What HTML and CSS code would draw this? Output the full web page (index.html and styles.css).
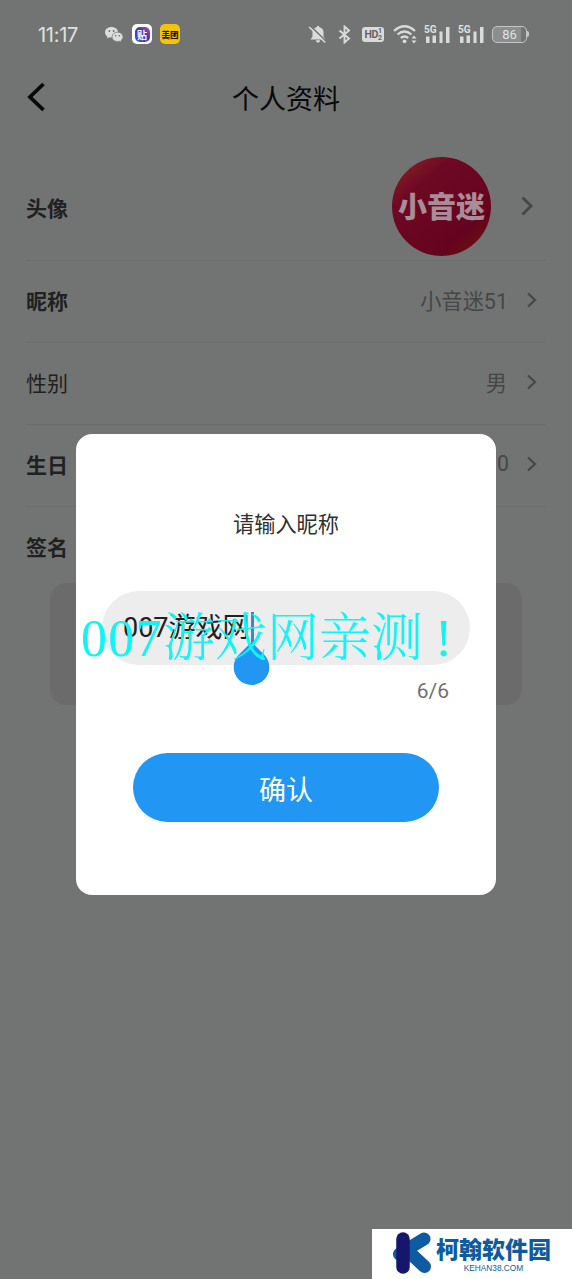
FILE: index.html
```html
<!DOCTYPE html>
<html lang="zh-CN">
<head>
<meta charset="utf-8">
<title>个人资料</title>
<link rel="stylesheet" href="styles.css">
</head>
<body>
<div class="screen">
  <div class="status">
    <span class="time">11:17</span>
    <svg class="wechat" width="20" height="17" viewBox="0 0 20 17"><path d="M7.500 1C3.700 1 1 3.400 1 6.300c0 1.800.9 3.200 2.400 4.200L3 12.500l2.200-1.200c.8.200 1.500.3 2.300.3 3.700 0 6.500-2.400 6.500-5.300S11.200 1 7.500 1z" fill="#dcdedd"/><path d="M13.500 6.200c-3 0-5.500 2-5.500 4.700s2.500 4.600 5.500 4.600c.7 0 1.300-.1 1.900-.3l2 1-.4-1.800c1.300-.9 2-2.100 2-3.500 0-2.700-2.500-4.700-5.500-4.700z" fill="#dcdedd" stroke="#727473" stroke-width=".7"/><g fill="#666867"><circle cx="5.400" cy="5" r=".9"/><circle cx="9.600" cy="5" r=".9"/><circle cx="11.700" cy="9.700" r=".8"/><circle cx="15.300" cy="9.700" r=".8"/></g></svg>
    <span class="app tieba"><b>贴</b></span>
    <span class="app meituan">美团</span>
    <div class="system">
      <svg width="20" height="19" viewBox="0 0 20 19"><path d="M10 1c.9 0 1.300.5 1.300 1.200 3 .6 4.200 2.500 4.200 4.900v4.400l2 2.900h-15l2-2.900V7.100c0-2.400 1.200-4.300 4.200-4.900C8.700 1.500 9.100 1 10 1zM7.800 15.200h4.400c-.2 1.500-1.100 2.300-2.200 2.300s-2-.8-2.200-2.300z" fill="#d9dbda"/><path d="M2.500 1l16 15.500" stroke="#727473" stroke-width="1.600"/><path d="M1.200 2l16 15.500" stroke="#d9dbda" stroke-width="1.600"/></svg>
      <svg class="bt" width="13" height="19" viewBox="0 0 13 19"><path d="M1.500 5.500l9.500 8-4.500 4V1.500l4.500 4-9.500 8" fill="none" stroke="#d9dbda" stroke-width="1.900"/></svg>
      <span class="hd">HD<i>1<br>2</i></span>
      <svg class="wifi" width="25" height="21" viewBox="0 0 25 21"><g fill="none" stroke="#d9dbda" stroke-width="2.300"><path d="M1 7Q11.500-2.500 22 7"/><path d="M4.500 10.500q7-6 14 0"/><path d="M7.800 14q3.700-3 7.400 0"/></g><circle cx="11.500" cy="17.300" r="1.900" fill="#d9dbda"/><path d="M18.500 14.500L21 11.500l2.500 3zM18.500 16.500l2.500 3 2.500-3z" fill="#d9dbda"/></svg>
      <span class="signal"><em>5G</em><svg width="26" height="17" viewBox="0 0 26 17"><path d="M2 10.500h3.500V17H2zM8.500 9.500H12V17H8.500zM15.500 5.500h3V17h-3zM22 1h3.500v16H22z" fill="#d9dbda"/></svg></span>
      <span class="signal second"><em>5G</em><svg width="26" height="17" viewBox="0 0 26 17"><path d="M2 10.500h3.500V17H2zM8.500 9.500H12V17H8.500zM15.500 5.500h3V17h-3zM22 1h3.500v16H22z" fill="#d9dbda"/></svg></span>
      <span class="battery">86</span>
    </div>
  </div>
  <header class="header">
    <svg class="back" width="22" height="30" viewBox="0 0 22 30"><path d="M19.500 2L6 15l13.500 13" fill="none" stroke="#080909" stroke-width="3.800"/></svg>
    <h1>个人资料</h1>
  </header>
  <main class="profile">
    <div class="row photo"><b>头像</b><span class="avatar">小音迷</span><svg class="arrow" width="12" height="20" viewBox="0 0 12 20"><path d="M1.500 1.500L10 10l-8.500 8.500" fill="none" stroke="#454746" stroke-width="2.800"/></svg></div>
    <div class="row"><b>昵称</b><span class="value">小音迷<i>51</i></span><svg class="arrow" width="10" height="16" viewBox="0 0 10 16"><path d="M1 1.500L8 8l-7 6.500" fill="none" stroke="#454746" stroke-width="2.200"/></svg></div>
    <div class="row"><span>性别</span><span class="value male">男</span><svg class="arrow" width="10" height="16" viewBox="0 0 10 16"><path d="M1 1.500L8 8l-7 6.500" fill="none" stroke="#454746" stroke-width="2.200"/></svg></div>
    <div class="row"><b>生日</b><span class="value birthday">0</span><svg class="arrow" width="10" height="16" viewBox="0 0 10 16"><path d="M1 1.500L8 8l-7 6.500" fill="none" stroke="#454746" stroke-width="2.200"/></svg></div>
    <div class="sign"><b>签名</b></div>
    <div class="bio"></div>
  </main>
  <section class="dialog">
    <p class="prompt">请输入昵称</p>
    <div class="input"><span class="typed"><i>007</i>游戏网</span><i class="caret"><svg class="handle" width="37" height="44" viewBox="0 0 37 44"><path d="M18.500 0L31 12.500a17.800 17.800 0 1 1-25 0z" fill="#2196f3"/></svg></i></div>
    <p class="count">6/6</p>
    <button class="confirm">确认</button>
  </section>
  <div class="watermark"><span>007</span>游戏网亲测<span class="bang">!</span></div>
  <div class="brand">
    <svg width="40" height="44" viewBox="0 0 40 44"><g fill="none" stroke-linecap="round" stroke-width="13"><path d="M6.500 23L31 8M17 22l14.500 13.500" stroke="#0e5ba2"/><path d="M10 8v28" stroke="#17166d" stroke-width="13.500"/></g></svg>
    <div class="brandtext"><strong>柯翰软件园</strong><small>KEHAN38.COM</small></div>
  </div>
</div>
</body>
</html>
```
FILE: styles.css
```css
* { box-sizing: border-box; }
body { margin: 0; background: #727473; font-family: "Noto Sans CJK SC", sans-serif; color: #202121; }
h1, p { margin: 0; font-weight: 400; }
i, em { font-style: normal; }
.screen { position: relative; width: 572px; height: 1279px; overflow: hidden; }
.status { height: 68px; padding-left: 38px; display: flex; align-items: center; color: #dfe1e0; }
.time { width: 66px; font: 20px/20px Inter, sans-serif; letter-spacing: -.3px; padding-top: 1px; }
.app { width: 20px; height: 20px; border-radius: 5px; display: flex; align-items: center; justify-content: center; }
.tieba { margin-left: 8px; background: #fff; }
.tieba b { width: 15px; height: 15px; border-radius: 5px; background: linear-gradient(45deg, #2457d5, #4936b0 60%, #c34ac8); color: #fff; font-size: 10px; line-height: 15px; text-align: center; }
.meituan { margin-left: 8px; background: #f5c407; color: #18140a; font-size: 8.5px; font-weight: 900; white-space: nowrap; }
.system { margin-left: 128px; display: flex; align-items: center; }
.bt { margin-left: 10px; }
.hd { margin-left: 11px; margin-top: 1px; width: 22px; height: 15px; border-radius: 3px; background: #d9dbda; color: #626463; display: flex; align-items: center; justify-content: center; font: bold 10.5px/15px Roboto, sans-serif; letter-spacing: -.4px; }
.hd i { font: bold 7px/6.500px Roboto, sans-serif; }
.wifi { margin-left: 9px; }
.signal { position: relative; margin-left: 6px; width: 26px; height: 17px; }
.signal svg { display: block; }
.signal.second { margin-left: 8px; }
.signal em { position: absolute; left: 0; top: -2px; font: bold 10px/11px Roboto, sans-serif; }
.battery { position: relative; margin-left: 8px; width: 35px; height: 17px; border: 1.5px solid #c4c6c5; border-radius: 5px; background: linear-gradient(90deg, #8c8e8d 86%, transparent 86%); font: 13px/15px Roboto, sans-serif; text-align: center; }
.battery::after { content: ""; position: absolute; left: 34px; top: 4px; width: 2px; height: 6px; border-radius: 0 2px 2px 0; background: #c4c6c5; }
.header { height: 60px; padding: 0 24px; display: grid; grid-template-columns: 22px 1fr 22px; align-items: center; }
.back { margin-top: -3px; }
.header h1 { font-size: 27px; line-height: 40px; text-align: center; color: #080909; }
.profile { padding: 0 26px; font-size: 21px; }
.row { height: 82px; display: flex; align-items: center; border-bottom: 1px solid #6b6d6c; }
.row b, .sign b { font-weight: 700; }
.row > :first-child { margin-top: -4px; }
.value { margin: -4px 0 0 auto; color: #454746; font-size: 21.2px; }
.value i { font: 21.5px Roboto, sans-serif; }
.birthday { font-family: Roboto, sans-serif; }
.arrow { margin: -4px 9px 0 19px; }
.birthday + .arrow { margin-left: 18px; }
.male + .arrow { margin-left: 20px; }
.row.photo { height: 133px; padding-top: 24px; }
.photo > b:first-child { margin-top: 2px; }
.avatar { margin-left: auto; width: 99px; height: 99px; margin-top: 0; border-radius: 50%; background: linear-gradient(140deg, #892426 4%, #6e0923 28%, #66031f 75%, #69100f 88%, #351317 90%); color: #a88c97; font-size: 29px; font-weight: 900; line-height: 97px; text-align: center; }
.photo .arrow { margin: 0 13px 0 30px; }
.sign { height: 76px; padding-top: 23px; line-height: 32px; }
.bio { margin: 0 24px; height: 122px; border-radius: 16px; background: #6b6b6b; }
.dialog { position: absolute; left: 76px; top: 434px; width: 420px; height: 461px; border-radius: 16px; background: #fff; padding: 73px 26px 0; }
.prompt { font-size: 21.2px; line-height: 32px; text-align: center; color: #303030; }
.input { margin-top: 52px; width: 368px; height: 74px; border-radius: 37px; background: #ededed; padding-left: 21px; display: flex; align-items: center; color: #202020; }
.typed { width: 128px; font-size: 27px; margin-top: -5px; white-space: nowrap; }
.typed i { font: 27px Roboto, sans-serif; }
.caret { position: relative; width: 3px; height: 33px; background: #4383cf; }
.handle { position: absolute; left: -18px; top: 30px; }
.count { margin-top: 10px; padding-right: 21px; text-align: right; font: 21px/32px Roboto, sans-serif; color: #707070; }
.confirm { display: block; width: 306px; height: 69px; margin: 46px auto 0; border: 0; border-radius: 35px; background: #2196f3; color: #fff; font: 27px/71px "Noto Sans CJK SC", sans-serif; padding: 0; }
.watermark { position: absolute; left: 81px; top: 599px; font: 300 52px/70px "Noto Serif CJK SC", "Source Han Serif SC", "AR PL UMing CN", SimSun, "Noto Sans CJK SC", serif; color: #0ff5f5; white-space: nowrap; }
.watermark span { font-family: "Liberation Serif", serif; font-weight: 400; letter-spacing: 1.3px; }
.watermark .bang { margin-left: 12px; }
.brand { position: absolute; left: 372px; top: 1229px; width: 200px; height: 50px; background: #fff; padding: 2px 0 0 21px; display: flex; }
.brandtext { margin-left: 3px; display: flex; flex-direction: column; align-items: center; color: #0e5ba2; }
.brandtext strong { font-size: 23px; line-height: 34px; font-weight: 900; white-space: nowrap; }
.brandtext small { margin-top: -1px; font: 8.3px/9px "Liberation Sans", sans-serif; }
```
